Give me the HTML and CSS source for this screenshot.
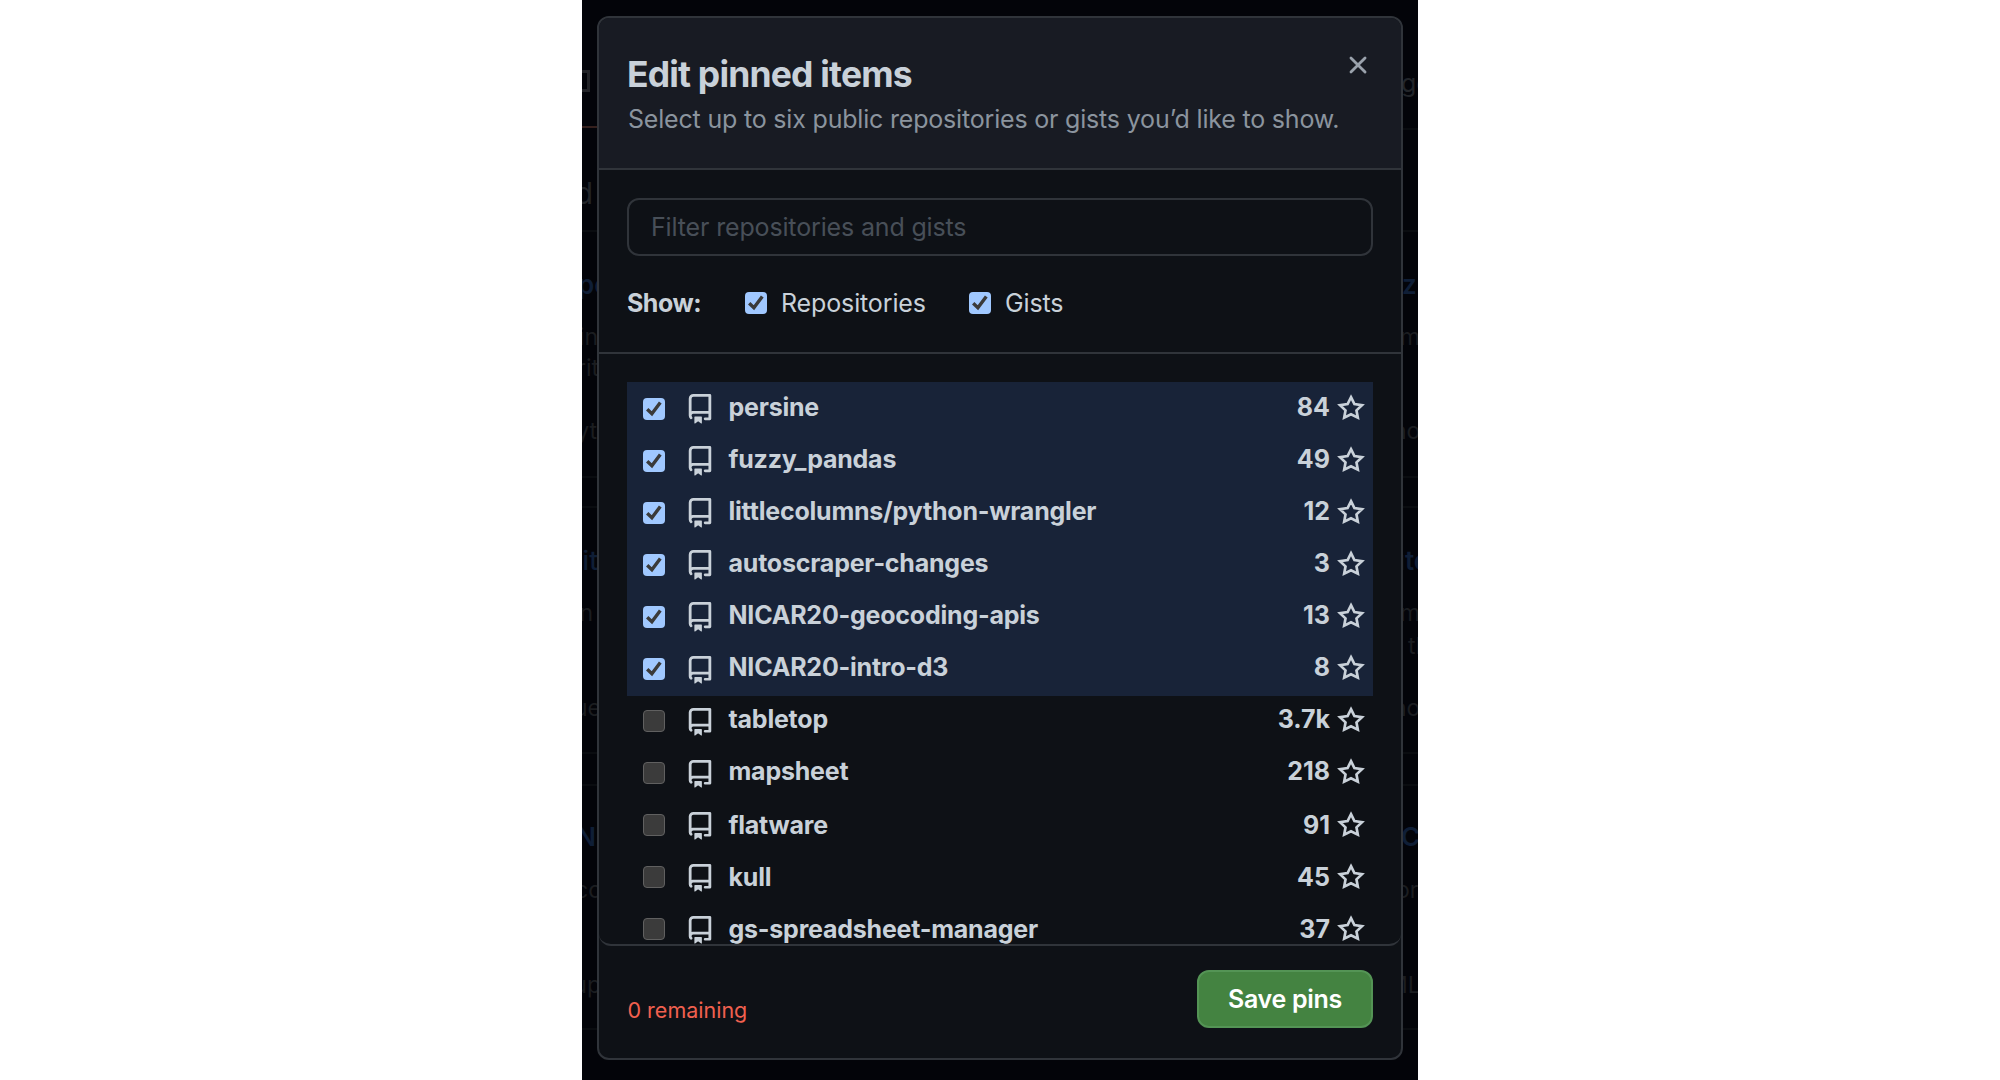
FILE: index.html
```html
<!DOCTYPE html>
<html lang="en">
<head>
<meta charset="utf-8">
<title>Edit pinned items</title>
<link rel="stylesheet" href="styles.css">
</head>
<body>
<svg class="sprite" aria-hidden="true">
  <symbol id="repo" viewBox="0 0 16 16" preserveAspectRatio="none"><path fill-rule="evenodd" d="M2 2.5A2.5 2.5 0 014.5 0h8.75a.75.75 0 01.75.75v12.5a.75.75 0 01-.75.75h-2.5a.75.75 0 110-1.5h1.75v-2h-8a1 1 0 00-.714 1.7.75.75 0 01-1.072 1.05A2.495 2.495 0 012 11.5v-9zm10.5-1V9h-8c-.356 0-.694.074-1 .208V2.5a1 1 0 011-1h8zM5 12.25v3.25a.25.25 0 00.4.2l1.45-1.087a.25.25 0 01.3 0L8.6 15.7a.25.25 0 00.4-.2v-3.25a.25.25 0 00-.25-.25h-3.5a.25.25 0 00-.25.25z"/></symbol>
  <symbol id="star" viewBox="0 0 28 28"><path fill="none" stroke="currentColor" stroke-width="2.7" stroke-linejoin="miter" d="M14 3.2L17.4 10L25 11.1L19.5 16.4L20.8 23.7L14 20.3L7.2 23.7L8.5 16.4L3 11.1L10.6 10Z"/></symbol>
  <symbol id="check" viewBox="0 0 22 22"><path fill="none" stroke="#3a3a3a" stroke-width="3.4" d="M4.2 11.2L8.9 15.7L17.3 4.5"/></symbol>
</svg>
<div class="page">
  <div class="behind" aria-hidden="true">
    <i class="box"></i>
    <i class="rule alert"></i>
    <i class="rule" style="top:128px;left:810px"></i>
    <i class="rule" style="top:230px"></i>
    <i class="rule" style="top:476px"></i>
    <i class="rule" style="top:506px"></i>
    <i class="rule" style="top:752px"></i>
    <i class="rule" style="top:784px"></i>
    <i class="rule" style="top:1028px"></i>
    <span class="big" style="top:177px;right:825px">d</span>
    <span class="blue" style="top:269px;left:-4px">pe</span>
    <span style="top:321px;right:820px">in</span>
    <span style="top:352px;right:819px">rit</span>
    <span style="top:415px;right:821px">yt</span>
    <span class="blue thin" style="top:545px;right:820px">it</span>
    <span style="top:597px;right:825px">n</span>
    <span style="top:692px;right:817px">ue</span>
    <span class="blue" style="top:821px;right:822px">N</span>
    <span style="top:874px;right:816px">co</span>
    <span style="top:969px;right:817px">up</span>
    <span class="mid" style="top:67px;left:819px">ge</span>
    <span class="blue" style="top:269px;left:820px">zz</span>
    <span style="top:321px;left:818px">m</span>
    <span style="top:415px;left:811px">ho</span>
    <span class="blue" style="top:545px;left:807px">ute</span>
    <span style="top:597px;left:818px">m</span>
    <span style="top:630px;left:826px">th</span>
    <span style="top:692px;left:811px">ho</span>
    <span class="blue" style="top:821px;left:819px">C</span>
    <span style="top:874px;left:814px">or</span>
    <span style="top:969px;left:805px">ML</span>
  </div>
  <div class="dialog" role="dialog">
    <header class="head">
      <div>
        <h1>Edit pinned items</h1>
        <p>Select up to six public repositories or gists you’d like to show.</p>
      </div>
      <svg class="close" viewBox="0 0 16 16"><path fill-rule="evenodd" d="M3.72 3.72a.75.75 0 011.06 0L8 6.94l3.22-3.22a.75.75 0 111.06 1.06L9.06 8l3.22 3.22a.75.75 0 11-1.06 1.06L8 9.06l-3.22 3.22a.75.75 0 01-1.06-1.06L6.94 8 3.72 4.78a.75.75 0 010-1.06z"/></svg>
    </header>
    <section class="filters">
      <div class="field">Filter repositories and gists</div>
      <div class="show">
        <b>Show:</b>
        <span class="opt"><svg class="cb on"><use href="#check"/></svg>Repositories</span>
        <span class="opt"><svg class="cb on"><use href="#check"/></svg>Gists</span>
      </div>
    </section>
    <section class="list">
      <div class="chosen">
        <div class="row"><svg class="cb on"><use href="#check"/></svg><svg class="repo"><use href="#repo"/></svg><span class="name">persine</span><span class="count">84</span><svg class="star"><use href="#star"/></svg></div>
        <div class="row"><svg class="cb on"><use href="#check"/></svg><svg class="repo"><use href="#repo"/></svg><span class="name">fuzzy_pandas</span><span class="count">49</span><svg class="star"><use href="#star"/></svg></div>
        <div class="row"><svg class="cb on"><use href="#check"/></svg><svg class="repo"><use href="#repo"/></svg><span class="name">littlecolumns/python-wrangler</span><span class="count">12</span><svg class="star"><use href="#star"/></svg></div>
        <div class="row"><svg class="cb on"><use href="#check"/></svg><svg class="repo"><use href="#repo"/></svg><span class="name">autoscraper-changes</span><span class="count">3</span><svg class="star"><use href="#star"/></svg></div>
        <div class="row"><svg class="cb on"><use href="#check"/></svg><svg class="repo"><use href="#repo"/></svg><span class="name">NICAR20-geocoding-apis</span><span class="count">13</span><svg class="star"><use href="#star"/></svg></div>
        <div class="row late"><svg class="cb on"><use href="#check"/></svg><svg class="repo"><use href="#repo"/></svg><span class="name">NICAR20-intro-d3</span><span class="count">8</span><svg class="star"><use href="#star"/></svg></div>
      </div>
      <div class="row late"><svg class="cb"></svg><svg class="repo"><use href="#repo"/></svg><span class="name">tabletop</span><span class="count">3.7k</span><svg class="star"><use href="#star"/></svg></div>
      <div class="row late"><svg class="cb"></svg><svg class="repo"><use href="#repo"/></svg><span class="name">mapsheet</span><span class="count">218</span><svg class="star"><use href="#star"/></svg></div>
      <div class="row late low"><svg class="cb"></svg><svg class="repo"><use href="#repo"/></svg><span class="name">flatware</span><span class="count">91</span><svg class="star"><use href="#star"/></svg></div>
      <div class="row late low"><svg class="cb"></svg><svg class="repo"><use href="#repo"/></svg><span class="name">kull</span><span class="count">45</span><svg class="star"><use href="#star"/></svg></div>
      <div class="row late low"><svg class="cb"></svg><svg class="repo"><use href="#repo"/></svg><span class="name">gs-spreadsheet-manager</span><span class="count">37</span><svg class="star"><use href="#star"/></svg></div>
    </section>
    <footer class="foot">
      <span class="left">0 remaining</span>
      <span class="save">Save pins</span>
    </footer>
  </div>
</div>
</body>
</html>
```
FILE: styles.css
```css
* { box-sizing: border-box; }
body {
  margin: 0;
  background: #fff;
  font: 25px/50px Inter, "Liberation Sans", sans-serif;
  color: #c9d1d9;
}
.sprite { display: none; }
.page {
  position: relative;
  width: 836px;
  height: 1080px;
  margin: 0 auto;
  padding: 16px 15px 20px;
  overflow: hidden;
  background: #030409;
}
/* Dimmed profile page, visible only at the sides of the dialog */
.behind { position: absolute; inset: 0; overflow: hidden; }
.behind span {
  position: absolute;
  line-height: 32px;
  font-size: 23px;
  white-space: nowrap;
  color: #1b1d20;
}
.behind .big { font-size: 30px; color: #222529; }
.behind .mid { font-size: 25px; color: #222529; }
.behind .blue { font-size: 26px; font-weight: 600; color: #0f1e36; }
.behind .thin { font-weight: 500; }
.box {
  position: absolute;
  left: -14px;
  top: 70px;
  width: 22px;
  height: 22px;
  border: 3px solid #222327;
}
.rule { position: absolute; left: 0; right: 0; height: 2px; background: #0a0c10; }
.rule.alert { top: 126px; right: auto; width: 30px; background: #35201d; }

.dialog {
  position: relative;
  display: flex;
  flex-direction: column;
  width: 806px;
  height: 1044px;
  border: 2px solid #30343a;
  border-radius: 12px;
  background: #0e1116;
  overflow: hidden;
}
.head {
  display: flex;
  justify-content: space-between;
  height: 152px;
  padding: 36px 27px 0 29px;
  border-bottom: 2px solid #30343a;
  background: #181b23;
}
h1 {
  margin: 0 0 0 -1px;
  font-size: 35.5px;
  line-height: 42px;
  font-weight: 700;
  letter-spacing: -.82px;
}
.head p {
  margin: 0;
  line-height: 46px;
  letter-spacing: -.19px;
  color: #8b949e;
}
.close { width: 30px; height: 30px; margin: -4px 1px 0 0; fill: #9aa2ac; }
.filters {
  height: 184px;
  padding: 28px 28px 0;
  border-bottom: 2px solid #30343a;
}
.field {
  height: 58px;
  padding: 0 22px;
  border: 2px solid #30343a;
  border-radius: 12px;
  line-height: 54px;
  letter-spacing: -.15px;
  color: #484f58;
}
.show { display: flex; align-items: center; height: 50px; margin-top: 22px; }
.show b { width: 118px; font-weight: 700; letter-spacing: -.5px; }
.opt { display: flex; align-items: center; width: 224px; gap: 14px; letter-spacing: -.13px; }
.cb {
  flex: none;
  width: 22px;
  height: 22px;
  border: 1px solid #606060;
  border-radius: 4px;
  background: #3b3b3b;
}
.cb.on { border: 0; background: #a0c8ff; }
.list {
  height: 592px;
  padding: 28px 28px 0;
  border-bottom: 2px solid #30343a;
  border-radius: 0 0 12px 12px;
  overflow: hidden;
}
.chosen { height: 314px; margin-bottom: -2px; background: #182338; }
.row {
  display: flex;
  align-items: flex-start;
  height: 52px;
  padding: 0 8px 0 16px;
  font-weight: 700;
  letter-spacing: -.22px;
}
.row .cb { margin-top: 16px; }
.repo { width: 30px; height: 30px; margin: 12px 13.5px 0 20px; fill: #c9d1d9; }
.name { flex: 1; }
.count { margin-right: 7px; letter-spacing: 0; }
.star { width: 28px; height: 28px; margin-top: 12px; color: #c9d1d9; }
.late .repo { height: 28px; margin-top: 14px; }
.low .name, .low .count { padding-top: 2px; }
.low .star { margin-top: 13px; }
.foot {
  display: flex;
  flex: 1;
  align-items: flex-start;
  justify-content: space-between;
  padding: 24px 28px 0;
}
.left { margin: 15px 0 0 .5px; font-size: 21.5px; color: #f0604f; }
.save {
  width: 176px;
  height: 58px;
  border: 2px solid #549455;
  border-radius: 12px;
  background: #448341;
  line-height: 54px;
  font-weight: 600;
  letter-spacing: -.3px;
  text-align: center;
  color: #fff;
}
```
